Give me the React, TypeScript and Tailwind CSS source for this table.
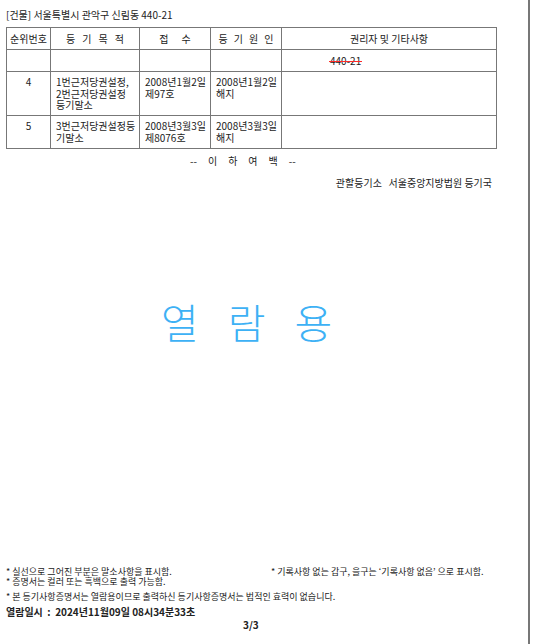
import React from "react";

const font = { fontFamily: '"Noto Sans CJK KR", "Noto Sans", sans-serif' };

const cols = ["w-[44px]", "w-[89px]", "w-[71px]", "w-[71px]", "w-[215px]"];

const headers = [
  { chars: ["순위번호"], gap: "gap-0" },
  { chars: ["등", "기", "목", "적"], gap: "gap-[7px]" },
  { chars: ["접", "수"], gap: "gap-[13px]" },
  { chars: ["등", "기", "원", "인"], gap: "gap-[6px]" },
  { chars: ["권리자 및 기타사항"], gap: "gap-0" },
];

const rows = [
  { no: "", purpose: [], receipt: [], cause: [], note: "440-21", h: "h-[22px]" },
  {
    no: "4",
    purpose: ["1번근저당권설정,", "2번근저당권설정", "등기말소"],
    receipt: ["2008년1월2일", "제97호"],
    cause: ["2008년1월2일", "해지"],
    note: "",
    h: "h-[44px]",
  },
  {
    no: "5",
    purpose: ["3번근저당권설정등", "기말소"],
    receipt: ["2008년3월3일", "제8076호"],
    cause: ["2008년3월3일", "해지"],
    note: "",
    h: "h-[33px]",
  },
];

function Lines({ items }: { items: string[] }) {
  return (
    <div className="pl-[5px] pt-[4px] leading-[11.5px]">
      {items.map((t, i) => (
        <div key={i}>{t}</div>
      ))}
    </div>
  );
}

export default function App() {
  return (
    <div
      className="relative w-[530px] h-[644px] bg-white border-r-2 border-[#777] text-[#222] text-[10px] leading-[12px] flex flex-col"
      style={font}
    >
      <div className="pl-[6px] pt-[9px] h-[27px]">[건물] 서울특별시 관악구 신림동 440-21</div>

      <table className="ml-[6px] border-collapse table-fixed w-[490px]">
        <thead>
          <tr className="h-[22px]">
            {headers.map((h, i) => (
              <th key={i} className={`${cols[i]} border border-[#777] font-normal align-middle p-0`}>
                <div className={`flex justify-center ${h.gap}`}>
                  {h.chars.map((c, j) => (
                    <span key={j}>{c}</span>
                  ))}
                </div>
              </th>
            ))}
          </tr>
        </thead>
        <tbody>
          {rows.map((r, i) => (
            <tr key={i} className={r.h}>
              <td className="border border-[#777] align-top text-center pt-[4px]">{r.no}</td>
              <td className="border border-[#777] align-top p-0">
                <Lines items={r.purpose} />
              </td>
              <td className="border border-[#777] align-top p-0">
                <Lines items={r.receipt} />
              </td>
              <td className="border border-[#777] align-top p-0">
                <Lines items={r.cause} />
              </td>
              <td className="border border-[#777] align-top p-0">
                {r.note && (
                  <div className="pl-[48px] pt-[5px]">
                    <span className="relative inline-block">
                      {r.note}
                      <span className="absolute left-[-1px] right-[-1px] top-[6px] h-px bg-[#ff2a2a]" />
                    </span>
                  </div>
                )}
              </td>
            </tr>
          ))}
        </tbody>
      </table>

      <div className="mt-[6px] pl-[190px] flex gap-[11px]">
        <span>--</span>
        <span>이</span>
        <span>하</span>
        <span>여</span>
        <span>백</span>
        <span>--</span>
      </div>
      <div className="mt-[10px] w-[492px] text-right whitespace-pre">관할등기소   서울중앙지방법원 등기국</div>

      <div className="mt-[108px] pl-[161px] flex gap-[29px] text-[41px] leading-[48px] text-[#3db1f5] font-light">
        <span>열</span>
        <span>람</span>
        <span>용</span>
      </div>

      <div className="flex-1" />

      <div className="pl-[6px] text-[9px] leading-[10px] pb-[13px]">
        <div className="flex">
          <div className="w-[265px]">* 실선으로 그어진 부분은 말소사항을 표시함.</div>
          <div>* 기록사항 없는 갑구, 을구는 ‘기록사항 없음’ 으로 표시함.</div>
        </div>
        <div>* 증명서는 컬러 또는 흑백으로 출력 가능함.</div>
        <div className="mt-[5px]">
          * 본 등기사항증명서는 열람용이므로 출력하신 등기사항증명서는 법적인 효력이 없습니다.
        </div>
        <div className="mt-[4px] text-[10px] leading-[12px] font-bold whitespace-pre">
          열람일시  :  2024년11월09일 08시34분33초
        </div>
        <div className="mt-[1px] pl-[237px] text-[10px] leading-[12px] font-bold">3/3</div>
      </div>
    </div>
  );
}
